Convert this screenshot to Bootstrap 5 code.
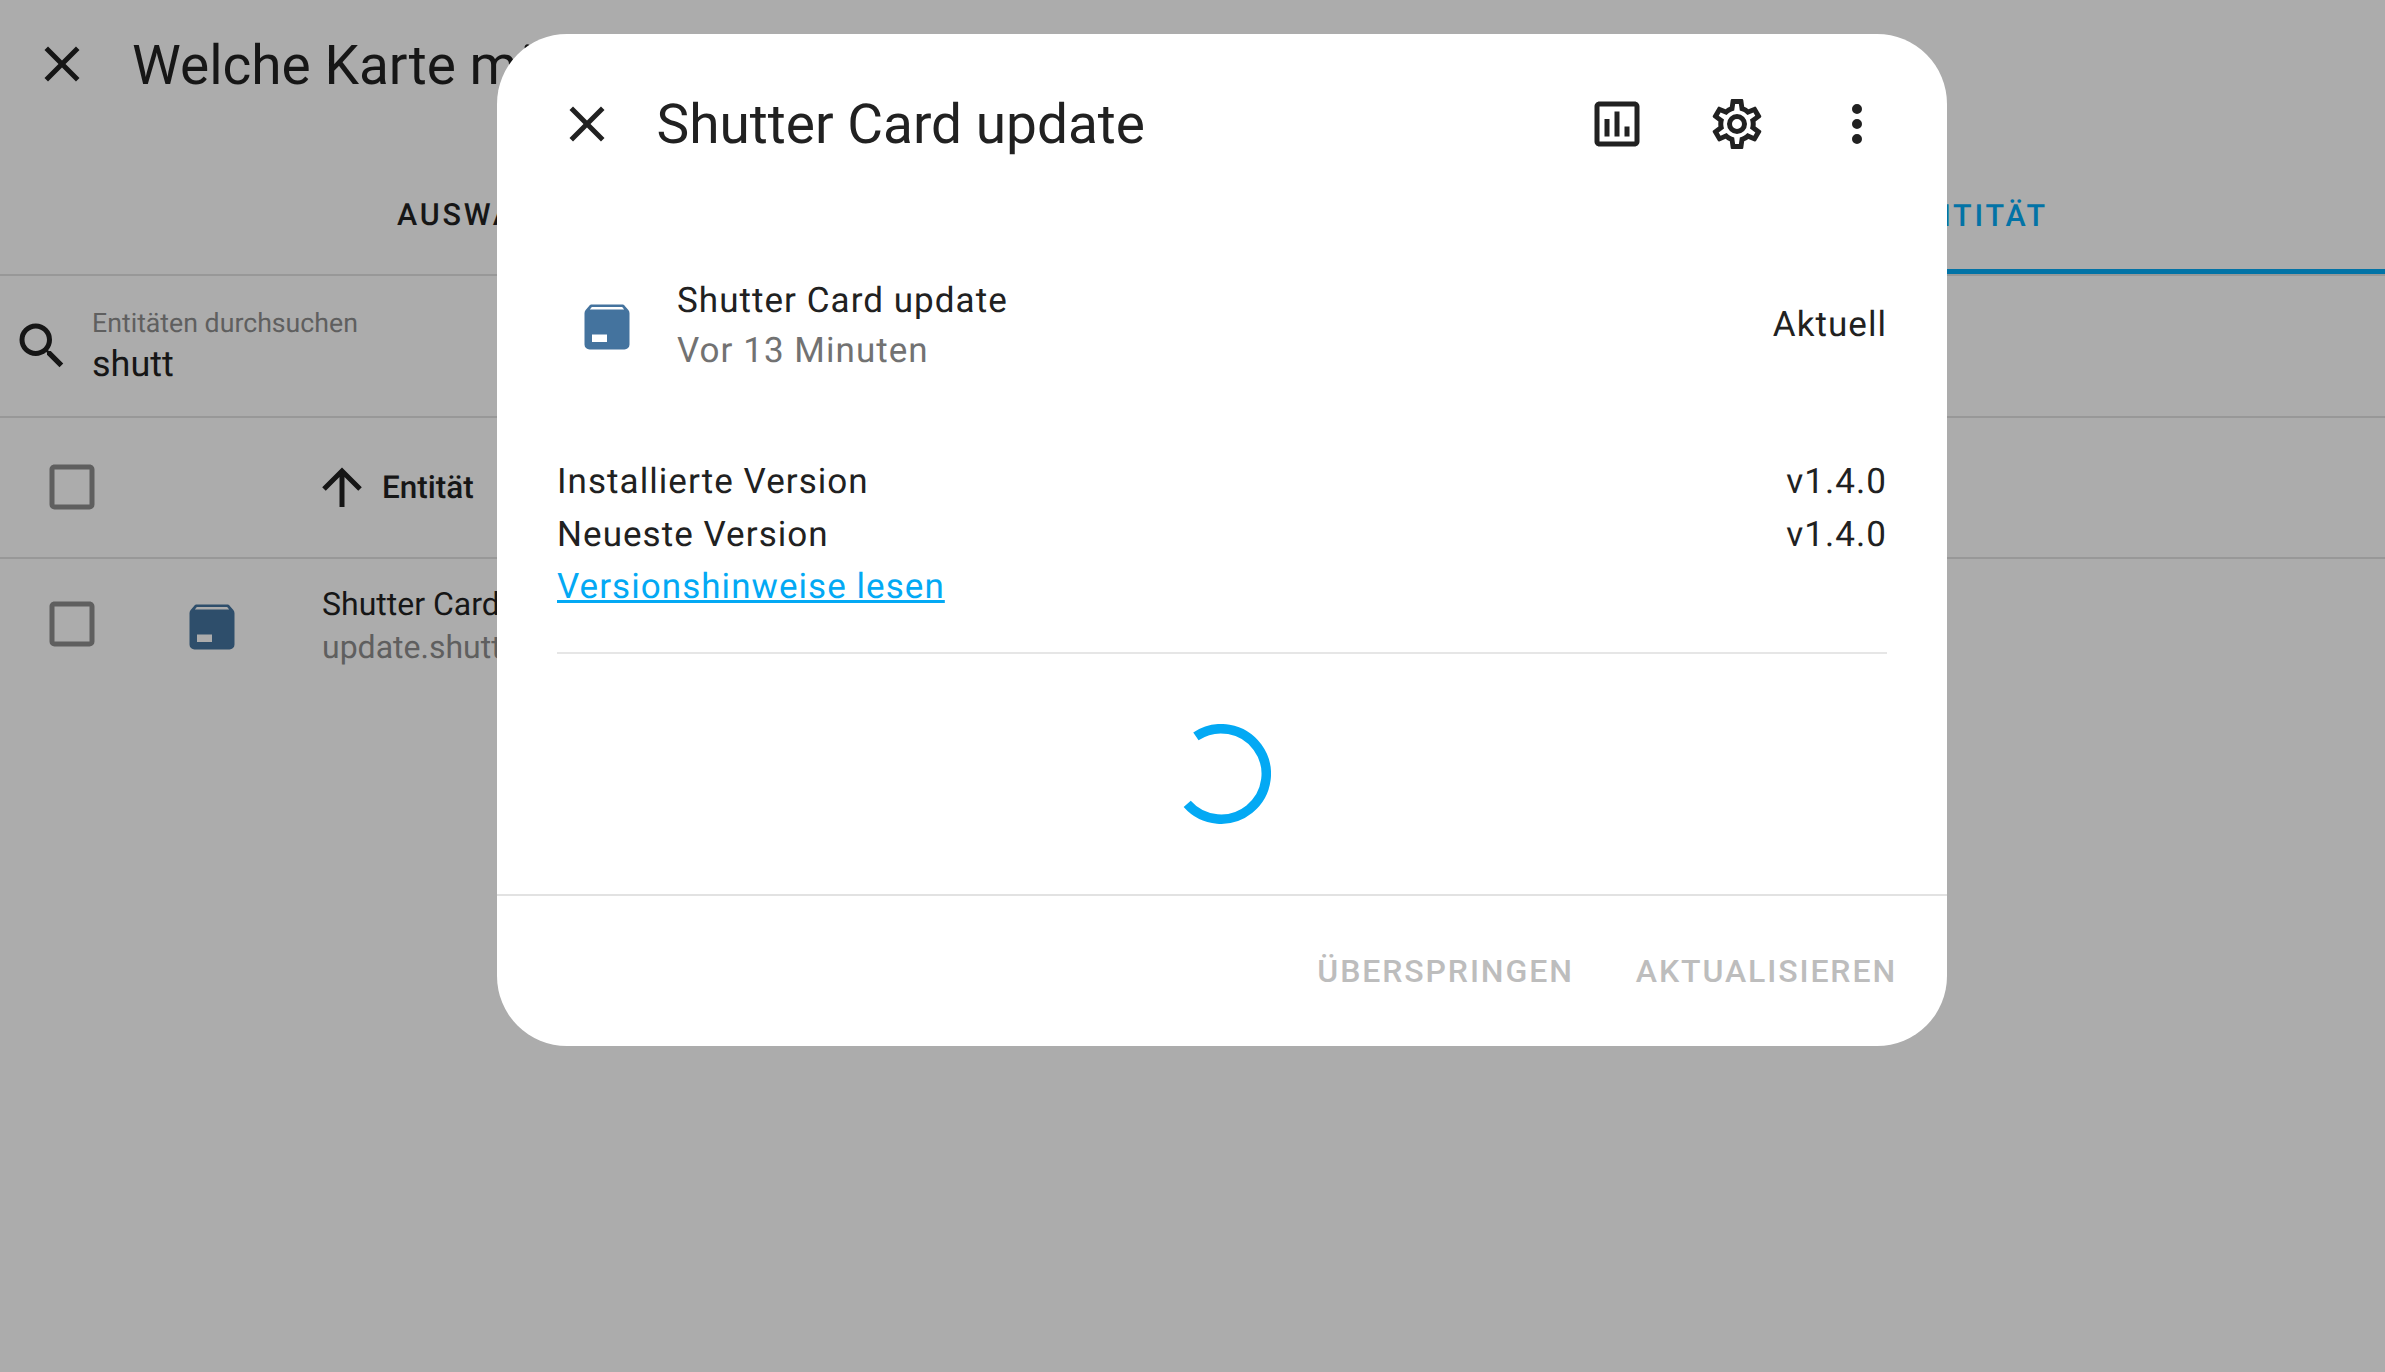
<!DOCTYPE html>
<html lang="de">
<head>
<meta charset="utf-8">
<title>Shutter Card update</title>
<link href="https://cdn.jsdelivr.net/npm/bootstrap@5.3.0/dist/css/bootstrap.min.css" rel="stylesheet">
<style>
html,body{height:100%;}
body{background:#acacac;font-family:Roboto,"Liberation Sans",sans-serif;color:#161616;overflow:hidden;text-rendering:geometricPrecision;}
svg{fill:currentColor;display:block;flex:none;}
.ic60{width:60px;height:60px;}
.pg-head{height:128px;padding-left:32px;}
.pg-title{font-size:55px;line-height:64px;margin-left:40px;margin-top:3px;white-space:nowrap;}
.pg-tabs{height:148px;border-bottom:2px solid #989898;}
.tab-one{padding-left:397px;width:1300px;padding-top:30px;font-size:30.5px;font-weight:500;letter-spacing:2.8px;}
.tab-two{flex:1;justify-content:flex-end;padding-right:337px;padding-top:36px;font-size:30.5px;font-weight:500;letter-spacing:2.8px;color:#0273a6;border-bottom:5px solid #0273a6;}
.pg-search{height:142px;border-bottom:2px solid #989898;padding-left:12px;}
.srch-label{font-size:26.7px;line-height:34px;color:#5f5f5f;}
.srch-value{font-size:36px;line-height:46px;margin-top:1px;}
.srch-text{margin-left:20px;}
.pg-thead{height:141px;border-bottom:2px solid #989898;padding-bottom:2px;}
.chk{margin-left:42px;color:#5f5f5f;}
.arrow-cell{margin-left:210px;}
.th-name{font-size:31.5px;font-weight:500;margin-left:10px;margin-top:2px;}
.pg-row{padding-top:35px;}
.pkg-bg{color:#2e4e6b;margin-left:80px;margin-top:3px;}
.row-name{margin-left:80px;margin-top:-11.5px;font-size:32px;line-height:43px;white-space:nowrap;width:200px;overflow:hidden;}
.row-sub{color:#5f5f5f;}
.upd-dialog{position:absolute;left:497px;top:34px;width:1450px;height:1012px;background:#fff;border-radius:70px;color:#212121;}
.dlg-head{margin-top:30px;height:120px;padding:0 30px;}
.icon-btn{width:120px;height:120px;padding:0;border:0;color:#212121;}
.dlg-title{font-size:55px;line-height:64px;margin-left:9.5px;margin-top:1px;margin-right:auto;}
.dlg-body{padding:0 60px;font-size:35px;letter-spacing:1.05px;}
.item-line{height:100px;margin-top:91.5px;}
.pkg-main{color:#44739e;margin-left:20px;margin-right:40px;margin-top:3px;}
.item-top{line-height:50px;}
.item-sub{line-height:50px;color:#727272;}
.versions{margin-top:80.5px;line-height:52.5px;}
.rel-link{color:#03a9f4;}
.sep{height:2px;background:#e6e6e6;margin-top:38px;}
.spin-wrap{margin-top:70px;height:100px;}
.spin{width:100px;height:100px;margin-left:614px;fill:none;stroke:#03a9f4;stroke-width:9.5;}
.dlg-foot{margin-top:70px;border-top:2px solid #e2e2e2;padding:2px 50px 0 0;height:151px;}
.act{padding:0;border:0;font-size:32px;font-weight:500;letter-spacing:1.9px;color:#bdbdbd;margin-left:62px;opacity:1 !important;}
.act:disabled{color:#bdbdbd;}
</style>
</head>
<body>
<div class="pg-head d-flex align-items-center">
  <svg class="ic60" viewBox="0 0 24 24"><path d="M19,6.41L17.59,5L12,10.59L6.41,5L5,6.41L10.59,12L5,17.59L6.41,19L12,13.41L17.59,19L19,17.59L13.41,12L19,6.41Z"/></svg>
  <div class="pg-title">Welche Karte möchtest du hinzufügen?</div>
</div>
<div class="pg-tabs d-flex">
  <div class="tab-one d-flex align-items-center">AUSWAHL</div>
  <div class="tab-two d-flex align-items-center">NACH ENTITÄT</div>
</div>
<div class="pg-search d-flex align-items-center">
  <svg class="ic60" viewBox="0 0 24 24"><path d="M9.5,3A6.5,6.5 0 0,1 16,9.5C16,11.11 15.41,12.59 14.44,13.73L14.71,14H15.5L20.5,19L19,20.5L14,15.5V14.71L13.73,14.44C12.59,15.41 11.11,16 9.5,16A6.5,6.5 0 0,1 3,9.5A6.5,6.5 0 0,1 9.5,3M9.5,5C7,5 5,7 5,9.5C5,12 7,14 9.5,14C12,14 14,12 14,9.5C14,7 12,5 9.5,5Z"/></svg>
  <div class="srch-text">
    <div class="srch-label">Entitäten durchsuchen</div>
    <div class="srch-value">shutt</div>
  </div>
</div>
<div class="pg-thead d-flex align-items-center">
  <svg class="ic60 chk" viewBox="0 0 24 24"><path d="M19,3H5C3.89,3 3,3.89 3,5V19A2,2 0 0,0 5,21H19A2,2 0 0,0 21,19V5C21,3.89 20.1,3 19,3M19,5V19H5V5H19Z"/></svg>
  <svg class="ic60 arrow-cell" viewBox="0 0 24 24"><path d="M13,20H11V8L5.5,13.5L4.08,12.08L12,4.16L19.92,12.08L18.5,13.5L13,8V20Z"/></svg>
  <div class="th-name">Entität</div>
</div>
<div class="pg-row d-flex align-items-start">
  <svg class="ic60 chk" viewBox="0 0 24 24"><path d="M19,3H5C3.89,3 3,3.89 3,5V19A2,2 0 0,0 5,21H19A2,2 0 0,0 21,19V5C21,3.89 20.1,3 19,3M19,5V19H5V5H19Z"/></svg>
  <svg class="ic60 pkg-bg" viewBox="0 0 24 24"><path fill-rule="evenodd" d="M20.54,5.23L19.15,3.55C18.88,3.21 18.47,3 18,3H6C5.53,3 5.12,3.21 4.84,3.55L3.46,5.23C3.17,5.57 3,6 3,6.5V19A2,2 0 0,0 5,21H19A2,2 0 0,0 21,19V6.5C21,6 20.83,5.57 20.54,5.23ZM5.12,5L5.93,4H18.07L18.87,5ZM6,15H12V18H6Z"/></svg>
  <div class="row-name">
    <div>Shutter Card update</div>
    <div class="row-sub">update.shutter_card_update</div>
  </div>
</div>

<div class="upd-dialog d-flex flex-column">
  <div class="dlg-head d-flex align-items-center">
    <button class="btn icon-btn d-flex align-items-center justify-content-center" type="button" aria-label="Schließen"><svg class="ic60" viewBox="0 0 24 24"><path d="M19,6.41L17.59,5L12,10.59L6.41,5L5,6.41L10.59,12L5,17.59L6.41,19L12,13.41L17.59,19L19,17.59L13.41,12L19,6.41Z"/></svg></button>
    <div class="dlg-title">Shutter Card update</div>
    <button class="btn icon-btn d-flex align-items-center justify-content-center" type="button" aria-label="Verlauf"><svg class="ic60" viewBox="0 0 24 24"><path d="M9 17H7V10H9V17M13 17H11V7H13V17M17 17H15V13H17V17M19 19H5V5H19V19.1M19 3H5C3.9 3 3 3.9 3 5V19C3 20.1 3.9 21 5 21H19C20.1 21 21 20.1 21 19V5C21 3.9 20.1 3 19 3Z"/></svg></button>
    <button class="btn icon-btn d-flex align-items-center justify-content-center" type="button" aria-label="Einstellungen"><svg class="ic60" viewBox="0 0 24 24"><path d="M12,8A4,4 0 0,1 16,12A4,4 0 0,1 12,16A4,4 0 0,1 8,12A4,4 0 0,1 12,8M12,10A2,2 0 0,0 10,12A2,2 0 0,0 12,14A2,2 0 0,0 14,12A2,2 0 0,0 12,10M10,22C9.75,22 9.54,21.82 9.5,21.58L9.13,18.93C8.5,18.68 7.96,18.34 7.44,17.94L4.95,18.95C4.73,19.03 4.46,18.95 4.34,18.73L2.34,15.27C2.21,15.05 2.27,14.78 2.46,14.63L4.57,12.97L4.5,12L4.57,11L2.46,9.37C2.27,9.22 2.21,8.95 2.34,8.73L4.34,5.27C4.46,5.05 4.73,4.96 4.95,5.05L7.44,6.05C7.96,5.66 8.5,5.32 9.13,5.07L9.5,2.42C9.54,2.18 9.75,2 10,2H14C14.25,2 14.46,2.18 14.5,2.42L14.87,5.07C15.5,5.32 16.04,5.66 16.56,6.05L19.05,5.05C19.27,4.96 19.54,5.05 19.66,5.27L21.66,8.73C21.79,8.95 21.73,9.22 21.54,9.37L19.43,11L19.5,12L19.43,13L21.54,14.63C21.73,14.78 21.79,15.05 21.66,15.27L19.66,18.73C19.54,18.95 19.27,19.04 19.05,18.95L16.56,17.95C16.04,18.34 15.5,18.68 14.87,18.93L14.5,21.58C14.46,21.82 14.25,22 14,22H10M11.25,4L10.88,6.61C9.68,6.86 8.62,7.5 7.85,8.39L5.44,7.35L4.69,8.65L6.8,10.2C6.4,11.37 6.4,12.64 6.8,13.8L4.68,15.36L5.43,16.66L7.86,15.62C8.63,16.5 9.68,17.14 10.87,17.38L11.24,20H12.76L13.13,17.39C14.32,17.14 15.37,16.5 16.14,15.62L18.57,16.66L19.32,15.36L17.2,13.81C17.6,12.64 17.6,11.37 17.2,10.2L19.31,8.65L18.56,7.35L16.15,8.39C15.38,7.5 14.32,6.86 13.12,6.62L12.75,4H11.25Z"/></svg></button>
    <button class="btn icon-btn d-flex align-items-center justify-content-center" type="button" aria-label="Mehr"><svg class="ic60" viewBox="0 0 24 24"><path d="M12,16A2,2 0 0,1 14,18A2,2 0 0,1 12,20A2,2 0 0,1 10,18A2,2 0 0,1 12,16M12,10A2,2 0 0,1 14,12A2,2 0 0,1 12,14A2,2 0 0,1 10,12A2,2 0 0,1 12,10M12,4A2,2 0 0,1 14,6A2,2 0 0,1 12,8A2,2 0 0,1 10,6A2,2 0 0,1 12,4Z"/></svg></button>
  </div>
  <div class="dlg-body">
    <div class="item-line d-flex align-items-center">
      <svg class="ic60 pkg-main" viewBox="0 0 24 24"><path fill-rule="evenodd" d="M20.54,5.23L19.15,3.55C18.88,3.21 18.47,3 18,3H6C5.53,3 5.12,3.21 4.84,3.55L3.46,5.23C3.17,5.57 3,6 3,6.5V19A2,2 0 0,0 5,21H19A2,2 0 0,0 21,19V6.5C21,6 20.83,5.57 20.54,5.23ZM5.12,5L5.93,4H18.07L18.87,5ZM6,15H12V18H6Z"/></svg>
      <div class="flex-grow-1">
        <div class="item-top">Shutter Card update</div>
        <div class="item-sub">Vor 13 Minuten</div>
      </div>
      <div>Aktuell</div>
    </div>
    <div class="versions">
      <div class="d-flex justify-content-between"><span>Installierte Version</span><span>v1.4.0</span></div>
      <div class="d-flex justify-content-between"><span>Neueste Version</span><span>v1.4.0</span></div>
      <a class="rel-link" href="#">Versionshinweise lesen</a>
    </div>
    <div class="sep"></div>
    <div class="spin-wrap">
      <svg class="spin" viewBox="0 0 100 100"><path d="M24.9,12.4A45.2,45.2 0 1 1 16.2,79.9"/></svg>
    </div>
  </div>
  <div class="dlg-foot d-flex align-items-center justify-content-end">
    <button class="btn act" type="button" disabled>ÜBERSPRINGEN</button>
    <button class="btn act" type="button" disabled>AKTUALISIEREN</button>
  </div>
</div>
<script src="https://cdn.jsdelivr.net/npm/bootstrap@5.3.0/dist/js/bootstrap.bundle.min.js"></script>
</body>
</html>
